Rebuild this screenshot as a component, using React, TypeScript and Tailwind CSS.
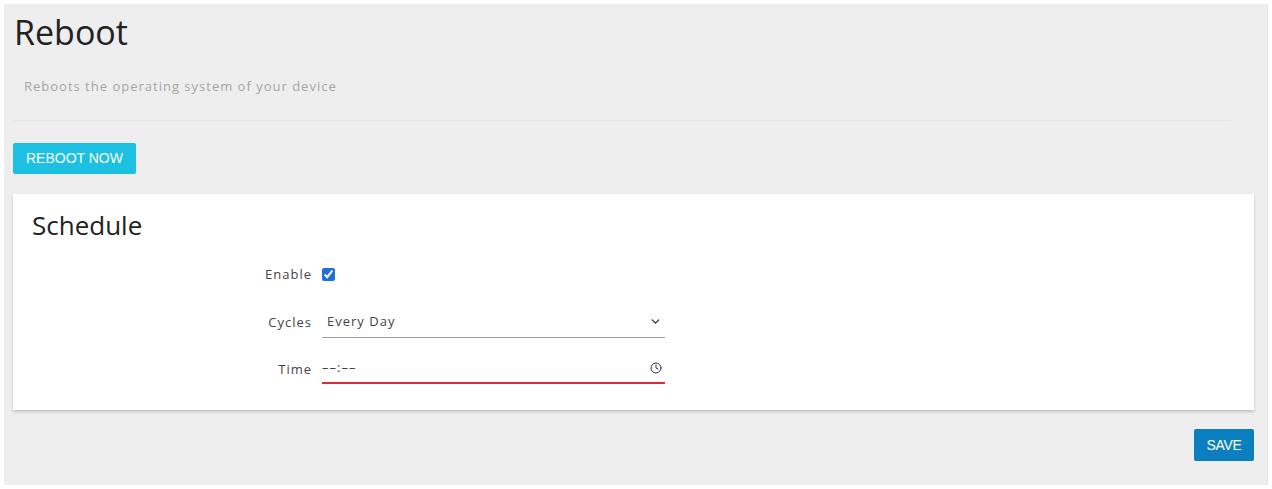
import React from "react";
import { ChevronDown, Clock } from "lucide-react";

const label = "text-right text-[13px] tracking-[1px] text-[#444] leading-none";

const App = () => {
  return (
    <div className="w-full h-[489px] bg-white p-1 font-['Open_Sans',sans-serif]">
      <div className="h-[481px] bg-[#eeeeee] border-r border-[#e4e4e4] pt-2 pl-[9px] pr-[13px] flex flex-col">
        <h1 className="pl-[1px] text-[34px] leading-[40px] text-[#222]">Reboot</h1>
        <p className="mt-6 pl-[11px] text-[13px] leading-5 tracking-[1px] text-[#a5a5a5]">
          Reboots the operating system of your device
        </p>
        <div className="mt-6 mr-[23px] h-px bg-[#e6e6e6]" />

        <button className="mt-[22px] self-start h-[31px] px-[13px] rounded-[2px] bg-[#1cc0e2] text-white text-[14px] font-['Liberation_Sans',sans-serif]">
          REBOOT NOW
        </button>

        <div className="mt-5 h-[216px] bg-white shadow-[0_2px_3px_rgba(0,0,0,0.18)] pt-[15px] pl-[19px] flex flex-col">
          <h2 className="text-[26px] leading-8 text-[#222]">Schedule</h2>

          <div className="mt-[21px] grid grid-cols-[280px_343px] gap-x-[10px] items-center">
            <span className={label}>Enable</span>
            <div className="h-6 flex items-center">
              <input
                type="checkbox"
                checked
                readOnly
                className="w-[13px] h-[13px] m-0 accent-[#1e6fd6]"
              />
            </div>

            <span className={`${label} mt-[20px]`}>Cycles</span>
            <div className="mt-[20px] h-8 border-b border-[#9e9e9e] flex items-center justify-between pl-[5px] pr-[3px] text-[13px] tracking-[1px] text-[#444]">
              <span>Every Day</span>
              <ChevronDown size={13} strokeWidth={2.5} className="text-[#333]" />
            </div>

            <span className={`${label} mt-4`}>Time</span>
            <div className="mt-4 h-[30px] border-b-2 border-[#e0283a] flex items-center justify-between pr-[3px] text-[13px] text-[#444]">
              <span className="tracking-[1px]">––:––</span>
              <Clock size={12} strokeWidth={2} className="text-[#333]" />
            </div>
          </div>
        </div>

        <button className="mt-[19px] self-end h-8 w-[60px] rounded-[2px] bg-[#0c7fc0] text-white text-[14px] font-['Liberation_Sans',sans-serif] tracking-tight">
          SAVE
        </button>
      </div>
    </div>
  );
};

export default App;
